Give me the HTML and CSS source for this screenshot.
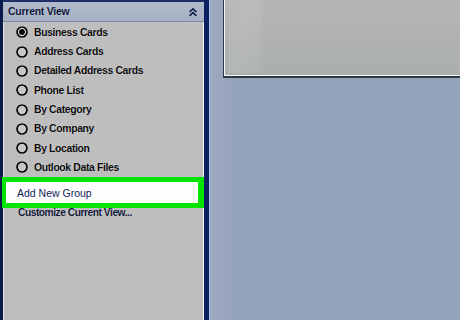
FILE: index.html
```html
<!DOCTYPE html>
<html>
<head>
<meta charset="utf-8">
<link rel="stylesheet" href="styles.css">
</head>
<body>
<div class="app">
  <div class="sidebar">
    <div class="panel">
      <div class="header">
        <span class="header-title">Current View</span>
        <svg class="chev" width="10" height="10" viewBox="0 0 10 10"><path d="M1.5 5 L5 1.8 L8.5 5 M1.5 8.8 L5 5.6 L8.5 8.8" fill="none" stroke="#102050" stroke-width="1.6"/></svg>
      </div>
      <ul class="views">
        <li class="view"><svg class="radio" width="12" height="12" viewBox="0 0 12 12"><circle cx="6" cy="6" r="5" fill="#d8d8d8" stroke="#000" stroke-width="1.7"/><circle cx="6" cy="6" r="2.9" fill="#000"/></svg><span>Business Cards</span></li>
        <li class="view"><svg class="radio" width="12" height="12" viewBox="0 0 12 12"><circle cx="6" cy="6" r="5" fill="#c6c6c6" stroke="#000" stroke-width="1.7"/></svg><span>Address Cards</span></li>
        <li class="view"><svg class="radio" width="12" height="12" viewBox="0 0 12 12"><circle cx="6" cy="6" r="5" fill="#c6c6c6" stroke="#000" stroke-width="1.7"/></svg><span>Detailed Address Cards</span></li>
        <li class="view"><svg class="radio" width="12" height="12" viewBox="0 0 12 12"><circle cx="6" cy="6" r="5" fill="#c6c6c6" stroke="#000" stroke-width="1.7"/></svg><span>Phone List</span></li>
        <li class="view"><svg class="radio" width="12" height="12" viewBox="0 0 12 12"><circle cx="6" cy="6" r="5" fill="#c6c6c6" stroke="#000" stroke-width="1.7"/></svg><span>By Category</span></li>
        <li class="view"><svg class="radio" width="12" height="12" viewBox="0 0 12 12"><circle cx="6" cy="6" r="5" fill="#c6c6c6" stroke="#000" stroke-width="1.7"/></svg><span>By Company</span></li>
        <li class="view"><svg class="radio" width="12" height="12" viewBox="0 0 12 12"><circle cx="6" cy="6" r="5" fill="#c6c6c6" stroke="#000" stroke-width="1.7"/></svg><span>By Location</span></li>
        <li class="view"><svg class="radio" width="12" height="12" viewBox="0 0 12 12"><circle cx="6" cy="6" r="5" fill="#c6c6c6" stroke="#000" stroke-width="1.7"/></svg><span>Outlook Data Files</span></li>
      </ul>
      <div class="highlight">
        <div class="add-group">Add New Group</div>
      </div>
      <div class="customize">Customize Current View...</div>
    </div>
    <div class="divider"></div>
  </div>
  <div class="main">
    <div class="window"><div class="window-strip"></div></div>
  </div>
</div>
</body>
</html>
```
FILE: styles.css
```css
html, body {
  margin: 0;
  padding: 0;
  width: 460px;
  height: 320px;
  overflow: hidden;
  font-family: "Liberation Sans", Arial, sans-serif;
}
.app {
  display: flex;
  width: 460px;
  height: 320px;
}
.sidebar {
  width: 210px;
  flex: none;
  display: flex;
  height: 100%;
}
.panel {
  flex: 1;
  background: #bebebe;
  border-left: 3px solid #0b1a4c;
  box-shadow: inset 1px 0 0 #e6e6e6, inset -1px 0 0 #f2f2f2;
  padding: 0 1px;
  display: flex;
  flex-direction: column;
}
.header {
  height: 19px;
  border-top: 2px solid #1d2f66;
  border-bottom: 1px solid #7f8aa6;
  background: linear-gradient(#b1bbcc, #a6b0c3);
  display: flex;
  align-items: center;
  justify-content: space-between;
  padding: 0 6px 0 5px;
  margin: 0 -1px 0 -1px;
}
.header-title {
  font-size: 10.4px;
  font-weight: bold;
  color: #0a1436;
  letter-spacing: -0.2px;
  text-shadow: 0 0 1px rgba(255,255,255,0.5);
}
.chev {
  display: block;
}
.views {
  list-style: none;
  margin: 0;
  padding: 0.7px 0 0 0;
}
.view {
  height: 19.3px;
  display: flex;
  align-items: center;
  padding-left: 12px;
  gap: 6px;
  font-size: 10.4px;
  font-weight: bold;
  letter-spacing: -0.35px;
  color: #0a0a0a;
  text-shadow: 0 0 1px rgba(255,255,255,0.7);
}
.radio {
  display: block;
  flex: none;
  filter: drop-shadow(0 0 0.6px #fff);
}
.highlight {
  background: #00e400;
  margin: 0 -1px 0 -2px;
  padding: 5px 6px 5px 4px;
}
.add-group {
  background: #fdfdfd;
  height: 21px;
  display: flex;
  align-items: center;
  padding-left: 11px;
  font-size: 10.5px;
  color: #14225a;
}
.customize {
  padding-left: 14px;
  font-size: 10.2px;
  line-height: 10px;
  margin-top: 0px;
  font-weight: bold;
  letter-spacing: -0.45px;
  color: #0c1433;
  text-shadow: 0 0 1px rgba(255,255,255,0.7);
}
.divider {
  width: 5px;
  flex: none;
  background: #0c2062;
  border-right: 1px solid #a9c0e6;
}
.main {
  flex: 1;
  background: linear-gradient(to right, #9da9c0 0, #95a3ba 22px);
  padding-left: 13px;
}
.window {
  height: 76px;
  border-left: 1px solid #2e3546;
  border-bottom: 2px solid #2e3546;
  box-shadow: inset 1px -1px 0 #f4f6f8;
  background: linear-gradient(#b5b5b5, #aaafad);
  display: flex;
  padding-left: 4px;
}
.window-strip {
  width: 35px;
  margin-bottom: 3px;
  background: linear-gradient(100deg, rgba(255,255,255,0.05), rgba(255,255,255,0.1) 40%, rgba(255,255,255,0.04));
}
```
